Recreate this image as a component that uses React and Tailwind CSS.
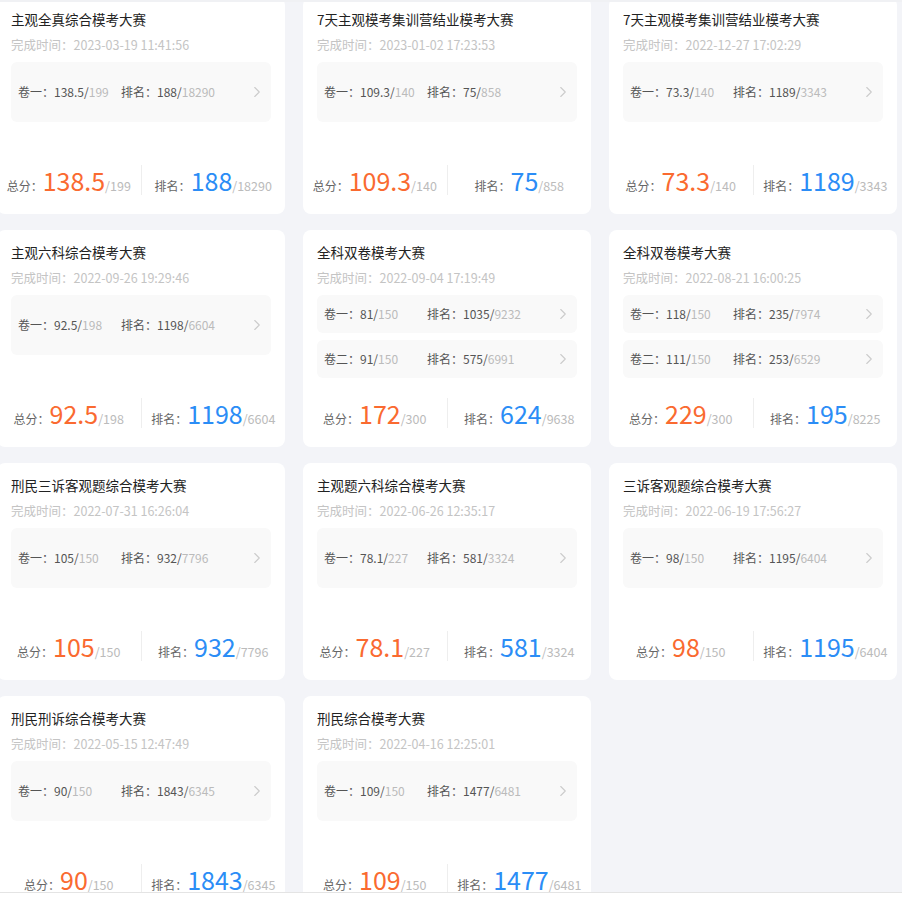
import React from 'react';
import { ChevronRight } from 'lucide-react';

const records = [{
  title: '主观全真综合模考大赛',
  time: '2023-03-19 11:41:56',
  papers: [{ name: '卷一', score: '138.5', full: '199', rank: '188', total: '18290' }],
  score: '138.5', full: '199', rank: '188', total: '18290'
}, {
  title: '7天主观模考集训营结业模考大赛',
  time: '2023-01-02 17:23:53',
  papers: [{ name: '卷一', score: '109.3', full: '140', rank: '75', total: '858' }],
  score: '109.3', full: '140', rank: '75', total: '858'
}, {
  title: '7天主观模考集训营结业模考大赛',
  time: '2022-12-27 17:02:29',
  papers: [{ name: '卷一', score: '73.3', full: '140', rank: '1189', total: '3343' }],
  score: '73.3', full: '140', rank: '1189', total: '3343'
}, {
  title: '主观六科综合模考大赛',
  time: '2022-09-26 19:29:46',
  papers: [{ name: '卷一', score: '92.5', full: '198', rank: '1198', total: '6604' }],
  score: '92.5', full: '198', rank: '1198', total: '6604'
}, {
  title: '全科双卷模考大赛',
  time: '2022-09-04 17:19:49',
  papers: [
    { name: '卷一', score: '81', full: '150', rank: '1035', total: '9232' },
    { name: '卷二', score: '91', full: '150', rank: '575', total: '6991' }
  ],
  score: '172', full: '300', rank: '624', total: '9638'
}, {
  title: '全科双卷模考大赛',
  time: '2022-08-21 16:00:25',
  papers: [
    { name: '卷一', score: '118', full: '150', rank: '235', total: '7974' },
    { name: '卷二', score: '111', full: '150', rank: '253', total: '6529' }
  ],
  score: '229', full: '300', rank: '195', total: '8225'
}, {
  title: '刑民三诉客观题综合模考大赛',
  time: '2022-07-31 16:26:04',
  papers: [{ name: '卷一', score: '105', full: '150', rank: '932', total: '7796' }],
  score: '105', full: '150', rank: '932', total: '7796'
}, {
  title: '主观题六科综合模考大赛',
  time: '2022-06-26 12:35:17',
  papers: [{ name: '卷一', score: '78.1', full: '227', rank: '581', total: '3324' }],
  score: '78.1', full: '227', rank: '581', total: '3324'
}, {
  title: '三诉客观题综合模考大赛',
  time: '2022-06-19 17:56:27',
  papers: [{ name: '卷一', score: '98', full: '150', rank: '1195', total: '6404' }],
  score: '98', full: '150', rank: '1195', total: '6404'
}, {
  title: '刑民刑诉综合模考大赛',
  time: '2022-05-15 12:47:49',
  papers: [{ name: '卷一', score: '90', full: '150', rank: '1843', total: '6345' }],
  score: '90', full: '150', rank: '1843', total: '6345'
}, {
  title: '刑民综合模考大赛',
  time: '2022-04-16 12:25:01',
  papers: [{ name: '卷一', score: '109', full: '150', rank: '1477', total: '6481' }],
  score: '109', full: '150', rank: '1477', total: '6481'
}];

function PaperRow({ paper, tall }) {
  return <div className={`flex items-center pl-[7px] pr-[5px] rounded-md bg-[#f9f9f9] text-[12px] text-[#555] ${tall ? 'h-[60px]' : 'h-[38px]'}`}>
      <span className="w-[103px] shrink-0 whitespace-nowrap">
        {paper.name}：{paper.score}/<span className="text-[#bbb]">{paper.full}</span>
      </span>
      <span className="flex-1 whitespace-nowrap">
        排名：{paper.rank}/<span className="text-[#bbb]">{paper.total}</span>
      </span>
      <ChevronRight className="w-[18px] h-[18px] text-[#cccccc]" strokeWidth={1.5} />
    </div>;
}

function RecordCard({ item }) {
  const single = item.papers.length === 1;
  return <div className="h-[217px] bg-white rounded-lg px-[14px] pt-[13px] pb-[19px] flex flex-col">
      <div className="text-[13.5px] leading-[18px] text-[#222] whitespace-nowrap">{item.title}</div>
      <div className="mt-[8px] text-[12.5px] leading-[18px] text-[#c4c4c4] whitespace-nowrap">完成时间：{item.time}</div>
      <div className="mt-[8px] flex flex-col gap-[7px]">
        {item.papers.map(p => <PaperRow key={p.name} paper={p} tall={single} />)}
      </div>

      {/* 总分 / 排名 */}
      <div className="mt-auto mx-[-14px] flex items-center h-[30px]">
        <div className="flex-1 flex items-baseline justify-center whitespace-nowrap">
          <span className="text-[12px] text-[#666]">总分：</span>
          <span className="text-[25px] leading-[30px] text-[#fa6a30]">{item.score}</span>
          <span className="text-[12.5px] text-[#bbb]">/{item.full}</span>
        </div>
        <div className="w-px h-[30px] bg-[#eeeeee]" />
        <div className="flex-1 flex items-baseline justify-center whitespace-nowrap">
          <span className="text-[12px] text-[#666]">排名：</span>
          <span className="text-[25px] leading-[30px] text-[#2b8df6]">{item.rank}</span>
          <span className="text-[12.5px] text-[#bbb]">/{item.total}</span>
        </div>
      </div>
    </div>;
}

export default function App() {
  return <div className="w-[902px] h-[910px] flex flex-col bg-white" style={{ fontFamily: '"Noto Sans CJK SC", "Noto Sans", sans-serif' }}>
      <div className="relative h-[893px] overflow-hidden bg-[#f3f4f8] border-b border-[#e4e4e4]">
        <div className="absolute top-0 left-0 right-0 h-[2px] bg-[#f0f1f4] z-10" />
        <div className="grid grid-cols-[288px_288px_288px] gap-x-[18px] gap-y-[16px] ml-[-3px] mt-[-3px]">
          {records.map((item, i) => <RecordCard key={i} item={item} />)}
        </div>
      </div>
      <div className="flex-1 bg-white" />
    </div>;
}
